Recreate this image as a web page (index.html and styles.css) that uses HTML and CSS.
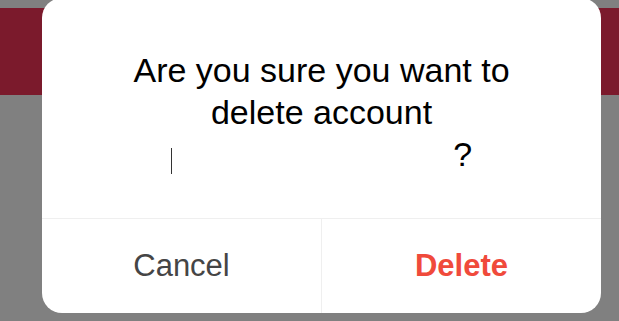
FILE: index.html
```html
<!DOCTYPE html>
<html>
<head>
<meta charset="utf-8">
<link rel="stylesheet" href="styles.css">
</head>
<body>
<div class="screen">
  <div class="header-band"></div>
  <div class="dialog">
    <div class="message">
      <p class="text">Are you sure you want to<br>delete account<br><span class="caret"></span><span class="blank"></span>?</p>
    </div>
    <div class="actions">
      <div class="btn cancel">Cancel</div>
      <div class="btn delete">Delete</div>
    </div>
  </div>
</div>
</body>
</html>
```
FILE: styles.css
```css
html, body {
  margin: 0;
  padding: 0;
}
body {
  width: 619px;
  height: 321px;
  overflow: hidden;
  background: #808080;
  font-family: "Liberation Sans", Arial, sans-serif;
}
.screen {
  position: relative;
  width: 619px;
  height: 321px;
  padding-top: 8px;
  box-sizing: border-box;
}
.header-band {
  height: 87px;
  background: #7b1a2c;
}
.dialog {
  position: absolute;
  left: 42px;
  top: -2px;
  width: 559px;
  height: 315px;
  background: #ffffff;
  border-radius: 20px;
  display: flex;
  flex-direction: column;
  overflow: hidden;
}
.message {
  padding: 51px 10px 0;
  height: 221px;
  box-sizing: border-box;
  border-bottom: 1px solid #efefef;
}
.text {
  margin: 0;
  text-align: center;
  font-size: 34px;
  line-height: 42px;
  color: #000000;
}
.caret {
  display: inline-block;
  width: 1.5px;
  height: 26px;
  background: #333333;
  vertical-align: -8px;
}
.blank {
  display: inline-block;
  width: 281px;
}
.actions {
  flex: 1;
  display: flex;
}
.btn {
  flex: 1;
  display: flex;
  align-items: center;
  justify-content: center;
  font-size: 31px;
}
.cancel {
  color: #454545;
  border-right: 1px solid #efefef;
}
.delete {
  color: #f04a3b;
  font-weight: bold;
}
```
